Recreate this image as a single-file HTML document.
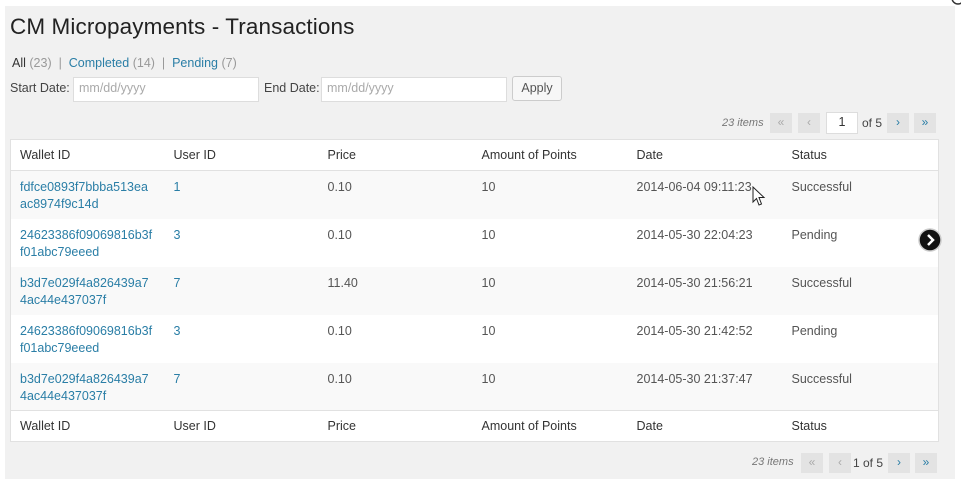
<!DOCTYPE html>
<html><head><style>
*{margin:0;padding:0;box-sizing:border-box}
body{width:961px;height:483px;background:#fff;font-family:"Liberation Sans",sans-serif;font-size:12.5px;color:#444;position:relative;overflow:hidden}
.g{position:absolute;left:5px;top:6px;width:950px;height:473px;background:#f1f1f1}
.a{position:absolute;white-space:nowrap}
h1{position:absolute;left:10px;top:14px;font-size:22.5px;font-weight:normal;color:#222;letter-spacing:0.1px}
a{color:#2a7ea6;text-decoration:none}
.m{color:#999}
.inp{position:absolute;height:25px;background:#fff;border:1px solid #ddd;color:#aaa;padding:3px 5px;font-size:12.5px}
.btn{position:absolute;height:25px;background:#f7f7f7;border:1px solid #ccc;border-radius:3px;color:#555;text-align:center;line-height:23px}
.pb{position:absolute;height:20px;width:22px;background:#e3e3e3;color:#aaa;text-align:center;line-height:19px;font-size:12px}
.pb.on{color:#2a7ea6}
table{position:absolute;left:10px;top:139px;width:929px;border-collapse:collapse;background:#fff;border:1px solid #e1e1e1}
td,th{text-align:left;font-weight:normal;vertical-align:top;padding:0 0 0 9px;line-height:17px}
th{color:#333;height:31px;vertical-align:middle}
thead th{border-bottom:1px solid #e1e1e1}
tfoot th{border-top:1px solid #e1e1e1}
tbody td{height:48px;padding-top:8px;color:#555}
tbody tr:nth-child(odd){background:#f9f9f9}
</style></head><body>
<div class="g"></div>
<h1>CM Micropayments - Transactions</h1>
<div class="a" style="left:12px;top:56px;color:#333">All <span class="m">(23)</span> &nbsp;<span class="m">|</span>&nbsp; <a>Completed</a> <span class="m">(14)</span> &nbsp;<span class="m">|</span>&nbsp; <a>Pending</a> <span class="m">(7)</span></div>
<div class="a" style="left:10px;top:81px">Start Date:</div>
<div class="inp" style="left:73px;top:77px;width:186px">mm/dd/yyyy</div>
<div class="a" style="left:264px;top:81px">End Date:</div>
<div class="inp" style="left:321px;top:77px;width:186px">mm/dd/yyyy</div>
<div class="btn" style="left:512px;top:76px;width:50px">Apply</div>
<div class="a" style="left:722px;top:117px;font-style:italic;color:#777;font-size:11px">23 items</div>
<div class="pb" style="left:770px;top:113px">«</div>
<div class="pb" style="left:798px;top:113px">‹</div>
<div class="inp" style="left:826px;top:112px;width:32px;height:22px;color:#333;text-align:center;padding:2px">1</div>
<div class="a" style="left:862px;top:116px;font-size:12px">of 5</div>
<div class="pb on" style="left:887px;top:113px">›</div>
<div class="pb on" style="left:914px;top:113px">»</div>
<table>
<colgroup><col style="width:154px"><col style="width:154px"><col style="width:154px"><col style="width:155px"><col style="width:155px"><col></colgroup>
<thead><tr><th>Wallet ID</th><th>User ID</th><th>Price</th><th>Amount of Points</th><th>Date</th><th>Status</th></tr></thead>
<tbody>
<tr><td><a>fdfce0893f7bbba513ea<br>ac8974f9c14d</a></td><td><a>1</a></td><td>0.10</td><td>10</td><td>2014-06-04 09:11:23</td><td>Successful</td></tr>
<tr><td><a>24623386f09069816b3f<br>f01abc79eeed</a></td><td><a>3</a></td><td>0.10</td><td>10</td><td>2014-05-30 22:04:23</td><td>Pending</td></tr>
<tr><td><a>b3d7e029f4a826439a7<br>4ac44e437037f</a></td><td><a>7</a></td><td>11.40</td><td>10</td><td>2014-05-30 21:56:21</td><td>Successful</td></tr>
<tr><td><a>24623386f09069816b3f<br>f01abc79eeed</a></td><td><a>3</a></td><td>0.10</td><td>10</td><td>2014-05-30 21:42:52</td><td>Pending</td></tr>
<tr><td><a>b3d7e029f4a826439a7<br>4ac44e437037f</a></td><td><a>7</a></td><td>0.10</td><td>10</td><td>2014-05-30 21:37:47</td><td>Successful</td></tr>
</tbody>
<tfoot><tr><th>Wallet ID</th><th>User ID</th><th>Price</th><th>Amount of Points</th><th>Date</th><th>Status</th></tr></tfoot>
</table>
<svg class="a" style="left:752px;top:186px" width="14" height="22" viewBox="0 0 14 22"><path d="M1 1 L1 16 L4.5 12.5 L7 19 L9.5 18 L7 11.5 L12 11.5 Z" fill="#fff" stroke="#222" stroke-width="1"/></svg>
<svg class="a" style="left:918px;top:228px" width="24" height="24" viewBox="0 0 24 24"><circle cx="12" cy="12" r="11" fill="#111" stroke="#ccc" stroke-width="1.5"/><path d="M10 7 L15 12 L10 17" fill="none" stroke="#fff" stroke-width="2.5"/></svg>
<svg class="a" style="left:950px;top:-4px" width="14" height="12"><circle cx="8" cy="2" r="6" fill="#fff" stroke="#333" stroke-width="1.5"/></svg>
<div class="a" style="left:752px;top:456px;font-style:italic;color:#777;font-size:11px">23 items</div>
<div class="pb" style="left:801px;top:453px">«</div>
<div class="pb" style="left:829px;top:453px">‹</div>
<div class="a" style="left:853px;top:456px;font-size:12px">1 of 5</div>
<div class="pb on" style="left:888px;top:453px">›</div>
<div class="pb on" style="left:915px;top:453px">»</div>
</body></html>
